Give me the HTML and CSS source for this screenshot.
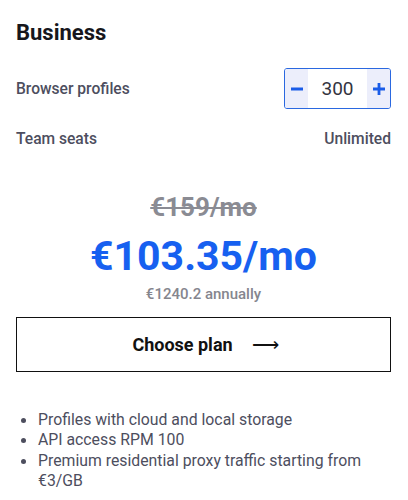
FILE: index.html
```html
<!DOCTYPE html>
<html>
<head>
<meta charset="utf-8">
<link rel="stylesheet" href="styles.css">
</head>
<body>
<div class="card">
  <h2 class="title">Business</h2>
  <div class="row row-profiles">
    <span class="label">Browser profiles</span>
    <div class="stepper">
      <button class="step">
        <svg width="14" height="14" viewBox="0 0 14 14"><path d="M1 7h12" stroke="#1a5ce8" stroke-width="2.8" stroke-linecap="butt"/></svg>
      </button>
      <span class="value">300</span>
      <button class="step">
        <svg width="14" height="14" viewBox="0 0 14 14"><path d="M1 7h12M7 1v12" stroke="#1a5ce8" stroke-width="2.8" stroke-linecap="butt"/></svg>
      </button>
    </div>
  </div>
  <div class="row row-seats">
    <span class="label">Team seats</span>
    <span class="label">Unlimited</span>
  </div>
  <div class="prices">
    <div class="old">€159/mo</div>
    <div class="new">€103.35/mo</div>
    <div class="annual">€1240.2 annually</div>
  </div>
  <button class="choose">Choose plan <span class="arrow">⟶</span></button>
  <ul class="features">
    <li>Profiles with cloud and local storage</li>
    <li>API access RPM 100</li>
    <li>Premium residential proxy traffic starting from €3/GB</li>
  </ul>
</div>
</body>
</html>
```
FILE: styles.css
```css
* { box-sizing: border-box; }
html, body { margin: 0; padding: 0; background: #fff; }
body { font-family: Roboto, "Liberation Sans", sans-serif; }
.card { padding: 20px 17px 0 16px; width: 408px; }
.title { margin: 0; font-size: 22px; line-height: 26px; font-weight: 700; color: #17171c; }
.row { display: flex; justify-content: space-between; align-items: center; }
.row-profiles { margin-top: 22px; }
.row-seats { margin-top: 20px; height: 20px; }
.label { font-size: 15.6px; line-height: 20px; font-weight: 500; color: #4d4e5e; }
.stepper { display: flex; align-items: stretch; width: 107px; height: 41px; border: 1px solid #2a68e0; border-radius: 3px; overflow: hidden; }
.step { width: 23px; border: 0; padding: 0; margin: 0; background: #eceefb; display: flex; align-items: center; justify-content: center; }
.value { flex: 1; display: flex; align-items: center; justify-content: center; font-size: 19px; color: #33343f; }
.prices { text-align: center; margin-top: 44px; }
.old { font-size: 26px; line-height: 28px; font-weight: 700; color: #8a8b93; text-decoration: line-through; text-decoration-thickness: 2px; }
.new { margin-top: 12px; font-size: 41px; line-height: 46px; font-weight: 700; color: #1760f0; }
.annual { margin-top: 6px; font-size: 15px; line-height: 18px; font-weight: 500; color: #85868e; }
.choose { display: flex; align-items: center; justify-content: center; gap: 19px; margin-top: 14px; width: 375px; height: 55px; border: 1.5px solid #111; background: #fff; font-family: Roboto, "Liberation Sans", sans-serif; font-size: 18px; font-weight: 700; color: #111; padding: 0 0 0 4px; }
.arrow { font-weight: 400; font-size: 19px; line-height: 1; }
.features { list-style: none; margin: 38px 0 0; padding: 0 0 0 22px; }
.features li { position: relative; font-size: 15.8px; line-height: 20.4px; color: #4d4e5e; }
.features li::before { content: ""; position: absolute; left: -17px; top: 8px; width: 5px; height: 5px; border-radius: 50%; background: #4d4e5e; }
```
